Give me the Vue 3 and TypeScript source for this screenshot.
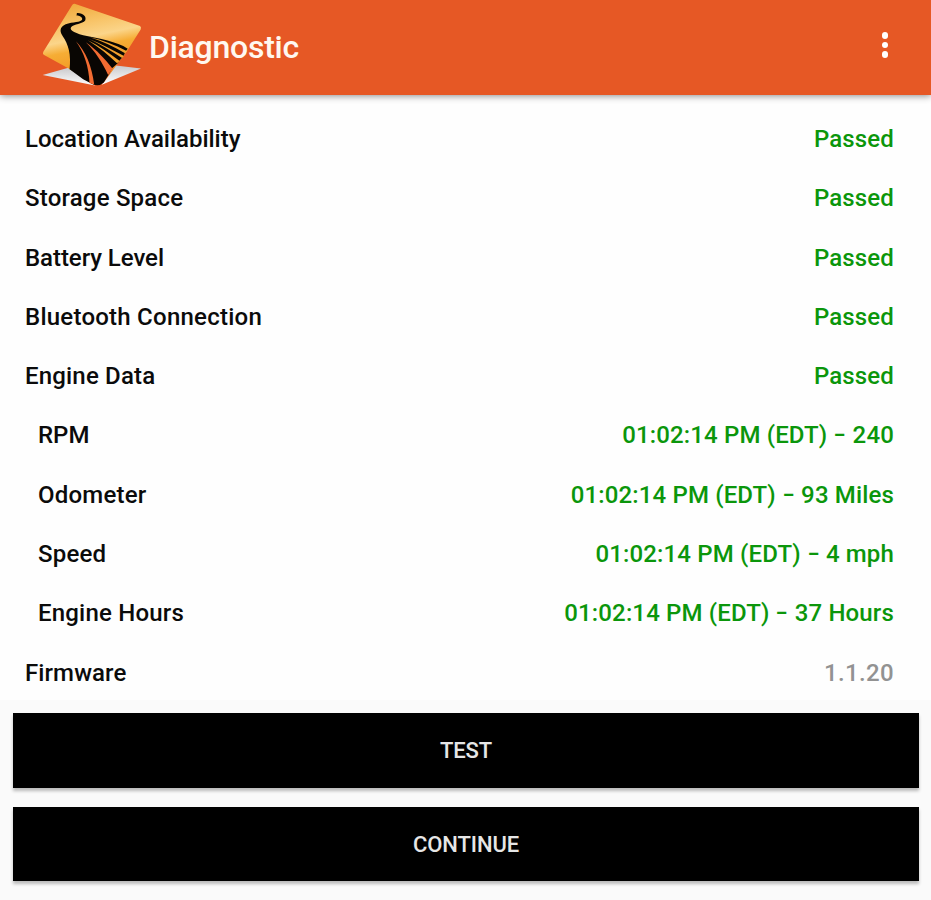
<script setup lang="ts">
interface Row {
  label: string
  value: string
  reading?: string
  tracking: number
  nested?: boolean
  muted?: boolean
}

const time = '01:02:14 PM (EDT)'
const rows: Row[] = [
  { label: 'Location Availability', value: 'Passed', tracking: -0.02 },
  { label: 'Storage Space', value: 'Passed', tracking: 0.2 },
  { label: 'Battery Level', value: 'Passed', tracking: -0.06 },
  { label: 'Bluetooth Connection', value: 'Passed', tracking: 0.24 },
  { label: 'Engine Data', value: 'Passed', tracking: 0.18 },
  { label: 'RPM', value: time, reading: '240', tracking: 0, nested: true },
  { label: 'Odometer', value: time, reading: '93 Miles', tracking: 0.2, nested: true },
  { label: 'Speed', value: time, reading: '4 mph', tracking: 0.2, nested: true },
  { label: 'Engine Hours', value: time, reading: '37 Hours', tracking: 0.2, nested: true },
  { label: 'Firmware', value: '1.1.20', tracking: 0.1, muted: true },
]
const actions: string[] = ['TEST', 'CONTINUE']
</script>

<template>
  <div class="screen">
    <header class="bar">
      <svg class="logo" viewBox="36 6 310 258" aria-hidden="true">
        <defs>
          <linearGradient id="tile" x1="0.3" y1="0" x2="0.55" y2="1">
            <stop offset="0" stop-color="#f0a93c" />
            <stop offset="0.25" stop-color="#f8c468" />
            <stop offset="0.42" stop-color="#fbd58a" />
            <stop offset="0.55" stop-color="#f6ad35" />
            <stop offset="0.78" stop-color="#f39a24" />
            <stop offset="1" stop-color="#ee6424" />
          </linearGradient>
          <linearGradient id="paper" x1="0" y1="0" x2="0" y2="1">
            <stop offset="0" stop-color="#c9c9cc" />
            <stop offset="1" stop-color="#ffffff" />
          </linearGradient>
        </defs>
        <path d="M38 225L118 203L160 236L196 257Z" fill="url(#paper)" />
        <path d="M252 196L334 206L216 255L232 226Z" fill="url(#paper)" />
        <path d="M134 11L331 78Q336 82 333 88L294 150L222 248Q208 260 190 253L119 207L41 164Q37 161 40 155L126 16Q129 10 134 11Z" fill="url(#tile)" />
        <path d="M141 39C160 38 171 51 166 61C158 72 132 71 124 81C118 89 128 97 160 106C210 116 260 125 294 146L288 154L281 169L270 181L264 190L246 206L236 225L222 248Q208 261 190 254L160 238L119 208C124 165 116 133 98 108C86 89 92 76 115 70C139 66 157 65 157 57C157 49 148 47 140 46Z" fill="#090603" />
        <g fill="#f2a02c">
          <path d="M180 112C216 120 254 134 292 154L286 160C252 140 218 124 180 112Z" />
          <path d="M178 117C214 131 248 150 283 168L277 174C246 155 212 133 178 117Z" />
          <path d="M174 121C209 138 240 162 270 183L262 190C236 166 208 142 174 121Z" />
        </g>
        <g fill="#f36c32">
          <path d="M168 127C202 151 226 178 248 206L235 225C218 189 196 154 168 127Z" />
          <path d="M138 124C168 154 186 200 193 254L179 249C177 200 162 156 138 124Z" />
        </g>
      </svg>
      <h1 class="title">Diagnostic</h1>
      <button class="menu" aria-label="More options">
        <span class="dot"></span><span class="dot"></span><span class="dot"></span>
      </button>
    </header>
    <main class="list">
      <div v-for="row in rows" :key="row.label" class="row" :class="{ nested: row.nested }">
        <span class="label" :style="{ letterSpacing: row.tracking + 'px' }">{{ row.label }}</span>
        <span v-if="row.reading" class="value">{{ row.value }} <span class="dash">–</span> {{ row.reading }}</span>
        <span v-else class="value" :class="{ muted: row.muted }">{{ row.value }}</span>
      </div>
    </main>
    <footer class="actions">
      <button v-for="name in actions" :key="name" class="action">{{ name }}</button>
    </footer>
  </div>
</template>

<style>
body {
  margin: 0;
  background: #fafafa;
}
</style>

<style scoped>
.screen {
  display: flex;
  flex-direction: column;
  height: 900px;
  box-sizing: border-box;
  overflow: hidden;
  background: #fafafa;
  font-family: Roboto, "Liberation Sans", sans-serif;
  font-weight: 500;
}
.bar {
  position: relative;
  display: flex;
  align-items: center;
  height: 95px;
  flex: none;
  box-sizing: border-box;
  padding: 0 36px 0 42px;
  background: #e65825;
  box-shadow: 0 1px 7px rgba(0, 0, 0, 0.45);
}
.logo {
  width: 103px;
  height: 86px;
  margin-bottom: 5px;
}
.title {
  margin: 0 0 2px 4px;
  color: #fff8f0;
  font-size: 32px;
  font-weight: 500;
  line-height: 40px;
  letter-spacing: -0.25px;
}
.menu {
  display: flex;
  flex-direction: column;
  gap: 3px;
  width: 20px;
  align-items: center;
  margin: 0 0 5px auto;
  padding: 0;
  border: 0;
  background: none;
}
.dot {
  width: 6.5px;
  height: 6.5px;
  border-radius: 50%;
  background: #fff;
}
.list {
  height: 605px;
  flex: none;
  box-sizing: border-box;
  padding: 14.3px 37px 0 25px;
  background: #fefefe;
}
.row {
  display: flex;
  align-items: center;
  justify-content: space-between;
  height: 59.3px;
  color: #0b0b0b;
  font-size: 24px;
  line-height: 30px;
  white-space: nowrap;
}
.nested {
  padding-left: 13px;
}
.value {
  color: #0b960b;
  letter-spacing: 0.15px;
}
.dash {
  display: inline-block;
  margin: 0 -1.3px;
  transform: scaleX(0.76);
}
.muted {
  color: #929292;
  letter-spacing: 0.35px;
}
.actions {
  display: flex;
  flex-direction: column;
  gap: 19px;
  padding: 13px 12px 0 13px;
}
.action {
  height: 74.5px;
  padding: 2px 0 0;
  border: 0;
  background: #000;
  color: #e6e6e6;
  font: 500 22px/30px Roboto, "Liberation Sans", sans-serif;
  letter-spacing: -0.1px;
  box-shadow: 0 3px 3px rgba(0, 0, 0, 0.25);
}
</style>
